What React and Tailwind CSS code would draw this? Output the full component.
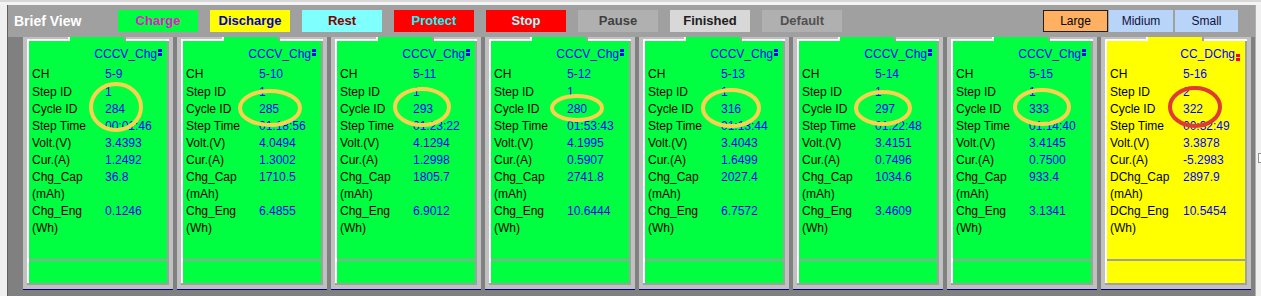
import React from "react";

const statusButtons = [
  { label: "Charge", cls: "bg-[#00ff40] text-[#f010d0]" },
  { label: "Discharge", cls: "bg-[#ffff00] text-[#0000c0]" },
  { label: "Rest", cls: "bg-[#80ffff] text-[#800000]" },
  { label: "Protect", cls: "bg-[#ff0000] text-[#00ffff]" },
  { label: "Stop", cls: "bg-[#ff0000] text-[#a0ffff]" },
  { label: "Pause", cls: "bg-[#b0b0b0] text-[#404040]" },
  { label: "Finished", cls: "bg-[#d8d8d8] text-[#202020]" },
  { label: "Default", cls: "bg-[#b0b0b0] text-[#505050]" },
];

const cards = [
  { title: "CCCV_Chg", ch: "5-9", step: "1", cycle: "284", time: "00:01:46", volt: "3.4393", cur: "1.2492", cap: "36.8", eng: "0.1246", ell: [87, 66, 25, 23] },
  { title: "CCCV_Chg", ch: "5-10", step: "1", cycle: "285", time: "01:18:56", volt: "4.0494", cur: "1.3002", cap: "1710.5", eng: "6.4855", ell: [87, 67, 30, 17] },
  { title: "CCCV_Chg", ch: "5-11", step: "1", cycle: "293", time: "01:23:22", volt: "4.1294", cur: "1.2998", cap: "1805.7", eng: "6.9012", ell: [85, 66, 27, 18] },
  { title: "CCCV_Chg", ch: "5-12", step: "1", cycle: "280", time: "01:53:43", volt: "4.1995", cur: "0.5907", cap: "2741.8", eng: "10.6444", ell: [86, 67, 25, 12] },
  { title: "CCCV_Chg", ch: "5-13", step: "1", cycle: "316", time: "01:13:44", volt: "3.4043", cur: "1.6499", cap: "2027.4", eng: "6.7572", ell: [86, 67, 28, 18] },
  { title: "CCCV_Chg", ch: "5-14", step: "1", cycle: "297", time: "01:22:48", volt: "3.4151", cur: "0.7496", cap: "1034.6", eng: "3.4609", ell: [84, 67, 27, 16] },
  { title: "CCCV_Chg", ch: "5-15", step: "1", cycle: "333", time: "01:14:40", volt: "3.4145", cur: "0.7500", cap: "933.4", eng: "3.1341", ell: [89, 66, 27, 17] },
  { title: "CC_DChg", ch: "5-16", step: "2", cycle: "322", time: "00:32:49", volt: "3.3878", cur: "-5.2983", cap: "2897.9", eng: "10.5454", ell: [88, 66, 25, 19], dchg: true },
];

const Row = ({ label, sub, value, tall }) => (
  <div className={`flex ${tall ? "leading-[18px]" : "leading-[17px]"}`}>
    <div className="w-[73px] text-black">
      <div>{label}</div>
      {sub && <div>{sub}</div>}
    </div>
    <div className="text-[#0000ff]">{value}</div>
  </div>
);

const Card = ({ c }) => {
  const bg = c.dchg ? "bg-[#ffff00]" : "bg-[#00ff40]";
  const iconColor = c.dchg ? "bg-[#ff0000]" : "bg-[#0000ff]";
  const pre = c.dchg ? "DChg" : "Chg";
  const [cx, cy, rx, ry] = c.ell;
  return (
    <div className="w-[150px] h-[253px] bg-[#c0c0c0] border-b border-[#000080] px-[4px] shrink-0">
      {/* tab strip */}
      <div className="flex h-[4px]">
        <div className="w-[41px] flex flex-col justify-end"><div className="h-[2px] bg-white" /></div>
        <div className="w-[2px] bg-white" />
        <div className={`w-[54px] ${bg}`} />
        <div className="w-[2px] bg-[#a0a0a0]" />
        <div className="w-[43px] flex flex-col justify-end"><div className="h-[2px] bg-white" /></div>
      </div>
      <div className="flex h-[242px]">
        <div className="w-[2px] bg-white" />
        <div className={`relative w-[138px] ${bg} flex flex-col`}>
          <div className="flex-1">
            <div className="mt-[5px] h-[16px] flex justify-end pr-[5px] leading-[16px] text-[#0000ff]">
              <span>{c.title}</span>
              <div className={`ml-[1px] w-[4px] flex flex-col gap-[1px] ${c.dchg ? "mt-[8px]" : "mt-[3px]"}`}>
                <div className={`h-[3px] ${iconColor}`} />
                <div className={`h-[3px] ${iconColor}`} />
              </div>
            </div>
            <div className="mt-[4px] pl-[3px]">
              <Row label="CH" value={c.ch} />
              <Row label="Step ID" value={c.step} tall />
              <Row label="Cycle ID" value={c.cycle} />
              <Row label="Step Time" value={c.time} />
              <Row label="Volt.(V)" value={c.volt} />
              <Row label="Cur.(A)" value={c.cur} />
              <Row label={`${pre}_Cap`} sub="(mAh)" value={c.cap} />
              <Row label={`${pre}_Eng`} sub="(Wh)" value={c.eng} />
            </div>
          </div>
          <div className="h-[2px] bg-[#a0a0a0]" />
          <div className="h-[22px]" />
          <svg className="absolute inset-0 pointer-events-none" width="138" height="242">
            <ellipse cx={cx} cy={cy} rx={rx} ry={ry} fill="none" stroke={c.dchg ? "#e03a36" : "#fad250"} strokeWidth="4" />
          </svg>
        </div>
        <div className="w-[2px] bg-[#a0a0a0]" />
      </div>
      <div className="h-[2px] bg-[#a0a0a0]" />
    </div>
  );
};

export default function App() {
  return (
    <div className="w-[1261px] h-[296px] overflow-hidden bg-[#f0f0f0] flex flex-col font-['Liberation_Sans',Arial,sans-serif] text-[12px]">
      <div className="h-[2px] bg-[#d8d8d8] shrink-0" />
      <div className="h-[3px] bg-[#f4f4f4] shrink-0" />
      <div className="flex flex-1">
        <div className="w-[7px] shrink-0" />
        <div className="w-[1248px] shrink-0 border-l border-[#606060] flex flex-col">
          {/* header */}
          <div className="h-[32px] bg-[#a0a0a0] flex items-start pt-[5px] pr-[17px]">
            <div className="w-[110px] pl-[6px] leading-[22px] text-[14px] font-bold text-white">Brief View</div>
            <div className="flex gap-[12px]">
              {statusButtons.map((b) => (
                <div key={b.label} className={`w-[80px] h-[22px] flex items-center justify-center text-[13px] font-bold ${b.cls}`}>
                  {b.label}
                </div>
              ))}
            </div>
            <div className="flex-1" />
            <div className="flex h-[22px]">
              <div className="w-[65px] flex items-center justify-center bg-[#ffb060] border border-[#202020] text-black">Large</div>
              <div className="w-[64px] ml-[1px] flex items-center justify-center bg-[#b8d4f8] text-[#101040]">Midium</div>
              <div className="w-[63px] ml-[2px] flex items-center justify-center bg-[#b8d4f8] text-[#101040]">Small</div>
            </div>
          </div>
          {/* cards */}
          <div className="flex-1 bg-[#808080] flex gap-[4px] pl-[15px]">
            {cards.map((c) => (
              <Card key={c.ch} c={c} />
            ))}
          </div>
        </div>
        <div className="w-[6px] shrink-0 border-l border-[#b0b0b0] flex flex-col">
          <div className="mt-[148px] h-[10px] ml-[2px] border border-[#909090] border-r-0 bg-white" />
        </div>
      </div>
    </div>
  );
}
